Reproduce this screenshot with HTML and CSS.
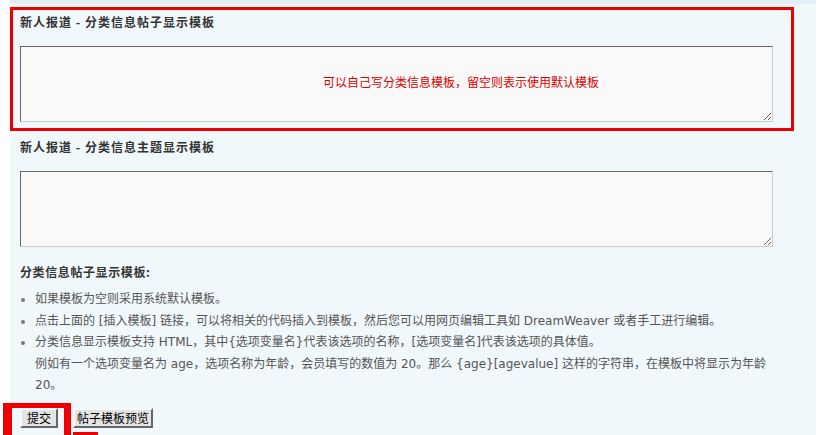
FILE: index.html
```html
<!DOCTYPE html>
<html lang="zh-CN">
<head>
    <meta charset="UTF-8">
    <title>分类信息模板</title>
    <link rel="stylesheet" href="styles.css">
</head>
<body>
    <div class="page">
        <div class="field hl">
            <div class="field-title">新人报道 - 分类信息帖子显示模板</div>
            <div class="tpl-box">
                <textarea class="tpl"></textarea>
                <span class="tpl-hint">可以自己写分类信息模板，留空则表示使用默认模板</span>
            </div>
        </div>

        <div class="field">
            <div class="field-title">新人报道 - 分类信息主题显示模板</div>
            <div class="tpl-box">
                <textarea class="tpl"></textarea>
            </div>
        </div>

        <div class="tips">
            <div class="tips-title">分类信息帖子显示模板:</div>
            <ul class="tips-list">
                <li>如果模板为空则采用系统默认模板。</li>
                <li>点击上面的 [插入模板] 链接，可以将相关的代码插入到模板，然后您可以用网页编辑工具如 DreamWeaver 或者手工进行编辑。</li>
                <li>分类信息显示模板支持 HTML，其中{选项变量名}代表该选项的名称，[选项变量名]代表该选项的具体值。<br>例如有一个选项变量名为 age，选项名称为年龄，会员填写的数值为 20。那么 {age}[agevalue] 这样的字符串，在模板中将显示为年龄 20。</li>
            </ul>
        </div>

        <div class="actions">
            <span class="mark"><button class="btn btn-submit" type="submit">提交</button></span>
            <span class="preview-wrap">
                <button class="btn" type="button">帖子模板预览</button>
                <span class="mark-tail"></span>
            </span>
        </div>
    </div>
</body>
</html>
```

FILE: styles.css
```css
body {
    margin: 0;
    background: #fff;
    font-family: Verdana, "DejaVu Sans", "Noto Sans CJK SC", sans-serif;
    font-size: 12px;
    color: #555;
}

.page {
    margin-left: 10px;
    width: 806px;
    min-height: 431px;
    background: #f1f8fc;
    border-top: 4px solid #e3eef6;
    padding-top: 3px;
    box-sizing: border-box;
}

.field {
    padding: 6px 10px 0;
}

.field.hl {
    border: 3px solid #e00;
    width: 784px;
    box-sizing: border-box;
    padding: 2px 7px 6px;
}

.field-title,
.tips-title {
    font-family: "Noto Sans CJK SC", sans-serif;
    font-weight: bold;
    color: #333;
    line-height: 20px;
    letter-spacing: 1px;
}

.tips-title {
    letter-spacing: 0.6px;
}

.tpl-box {
    position: relative;
    margin-top: 14px;
    width: 753px;
    height: 76px;
}

.tpl {
    display: block;
    width: 753px;
    height: 76px;
    box-sizing: border-box;
    margin: 0;
    border: 1px solid;
    border-color: #666 #ccc #ccc #666;
    background: #f9f9f9;
}

.tpl-hint {
    position: absolute;
    left: 303px;
    top: 26px;
    color: #d00;
    font-family: "Noto Sans CJK SC", sans-serif;
    line-height: 20px;
    pointer-events: none;
}

.tips {
    padding: 15px 36px 0 10px;
}

.tips-list {
    margin: 7px 0 0;
    padding-left: 15px;
    line-height: 21.5px;
    color: #555;
}

.tips-list li::marker {
    color: #777;
}

.actions {
    display: flex;
    align-items: flex-start;
    gap: 2px;
    margin: 6px 0 0 -7px;
}

.mark {
    display: inline-block;
    border: 5px solid #e00;
    border-left-width: 9px;
    border-right-width: 7px;
    padding: 0 6px 10px 8px;
}

.preview-wrap {
    display: flex;
    flex-direction: column;
    gap: 4px;
    margin-top: 5px;
}

.btn {
    font-family: "Noto Sans CJK SC", sans-serif;
    font-size: 12px;
    line-height: 14px;
    color: #000;
    background: #e4e4e4;
    border: 2px solid;
    border-color: #fafafa #666 #666 #fafafa;
    padding: 1px 2px;
    margin: 0;
}

.btn-submit {
    padding: 1px 5px;
}

.mark-tail {
    width: 25px;
    height: 3px;
    background: #e00;
}
```
